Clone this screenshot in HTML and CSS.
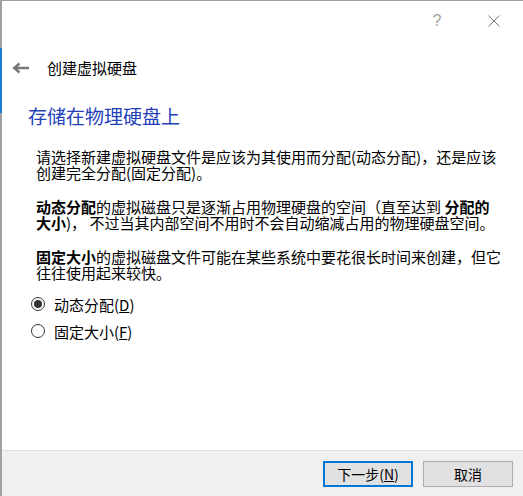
FILE: index.html
```html
<!DOCTYPE html>
<html>

<head>
    <meta charset="utf-8">
    <title>创建虚拟硬盘</title>
    <link rel="stylesheet" href="styles.css">
</head>

<body>
    <div class="window">
        <!-- Title bar buttons -->
        <div class="titlebar">
            <span class="tb-btn help">?</span>
            <span class="tb-btn">
                <svg width="12" height="12" viewBox="0 0 12 12">
                    <path d="M0.5 0.5 L11.5 11.5 M11.5 0.5 L0.5 11.5" stroke="#777" stroke-width="1" fill="none" />
                </svg>
            </span>
        </div>

        <!-- Wizard header -->
        <div class="header">
            <svg class="back" width="17" height="12" viewBox="0 0 17 12">
                <path d="M17 6 H3 M7.5 1.5 L2.2 6 L7.5 10.5" stroke="#777" stroke-width="2.4" fill="none" />
            </svg>
            <span class="wizard-title">创建虚拟硬盘</span>
        </div>

        <div class="content">
            <h1>存储在物理硬盘上</h1>

            <p>请选择新建虚拟硬盘文件是应该为其使用而分配(动态分配)，还是应该创建完全分配(固定分配)。</p>

            <p><b>动态分配</b>的虚拟磁盘只是逐渐占用物理硬盘的空间（直至达到 <b>分配的大小</b>)， 不过当其内部空间不用时不会自动缩减占用的物理硬盘空间。</p>

            <p><b>固定大小</b>的虚拟磁盘文件可能在某些系统中要花很长时间来创建，但它往往使用起来较快。</p>

            <div class="options">
                <label class="radio-row">
                    <input type="radio" name="storage" checked>
                    <span>动态分配(<u>D</u>)</span>
                </label>
                <label class="radio-row">
                    <input type="radio" name="storage">
                    <span>固定大小(<u>F</u>)</span>
                </label>
            </div>
        </div>

        <!-- Footer buttons -->
        <div class="footer">
            <button class="button default">下一步(<u>N</u>)</button>
            <button class="button">取消</button>
        </div>
    </div>
</body>

</html>
```

FILE: styles.css
```css
/* Basic reset and body styling */
body {
    margin: 0;
    font-family: "Noto Sans CJK SC", "Liberation Sans", sans-serif;
    background-color: #ffffff;
    color: #000;
}

.window {
    width: 523px;
    height: 496px;
    box-sizing: border-box;
    display: flex;
    flex-direction: column;
    border-top: 1px solid #a8a8a8;
    border-left: 2px solid #a0a0a0;
    border-image: linear-gradient(to bottom, #a0a0a0 48px, #1e7ad0 48px, #1e7ad0 113px, #a0a0a0 113px) 1;
    border-right: 0;
    border-bottom: 0;
}

.titlebar {
    height: 40px;
    display: flex;
    justify-content: flex-end;
    align-items: center;
    gap: 11px;
    padding-right: 6px;
}

.tb-btn {
    width: 46px;
    display: flex;
    justify-content: center;
    align-items: center;
}

.tb-btn.help {
    font-family: "Liberation Sans", sans-serif;
    font-size: 16px;
    color: #a0a0a0;
}

.header {
    height: 54px;
    display: flex;
    align-items: center;
    padding-left: 10px;
}

.back {
    margin-right: 18px;
}

.wizard-title {
    font-size: 15px;
    line-height: 20px;
}

.content {
    flex: 1;
    padding-left: 26px;
}

h1 {
    margin: 8px 0 0 0;
    font-size: 19px;
    line-height: 26px;
    font-weight: normal;
    color: #2440b8;
}

p {
    width: 468px;
    margin: 18px 0 0 8px;
    font-size: 15px;
    line-height: 16px;
}

p:first-of-type {
    margin-top: 20px;
}

/* radio choices */
.options {
    margin-top: 12px;
    display: flex;
    flex-direction: column;
    gap: 5px;
}

.radio-row {
    height: 22px;
    display: flex;
    align-items: center;
    font-size: 15px;
    padding-left: 3px;
}

.radio-row input[type="radio"] {
    appearance: none;
    flex-shrink: 0;
    box-sizing: border-box;
    width: 14px;
    height: 14px;
    margin: 0 9px 0 0;
    border: 1px solid #333;
    border-radius: 50%;
    background: #fff;
    display: flex;
    justify-content: center;
    align-items: center;
}

.radio-row input[type="radio"]:checked::after {
    content: "";
    width: 8px;
    height: 8px;
    border-radius: 50%;
    background: #333;
}

.footer {
    height: 46px;
    box-sizing: border-box;
    background-color: #f0f0f0;
    border-top: 1px solid #dfdfdf;
    display: flex;
    justify-content: flex-end;
    align-items: flex-start;
    gap: 10px;
    padding: 10px 10px 0 0;
}

.button {
    width: 90px;
    height: 26px;
    box-sizing: border-box;
    background-color: #e1e1e1;
    border: 1px solid #adadad;
    font-family: "Noto Sans CJK SC", sans-serif;
    font-size: 14px;
    padding: 0;
    color: #000;
}

.button.default {
    border: 2px solid #0078d7;
}
```
